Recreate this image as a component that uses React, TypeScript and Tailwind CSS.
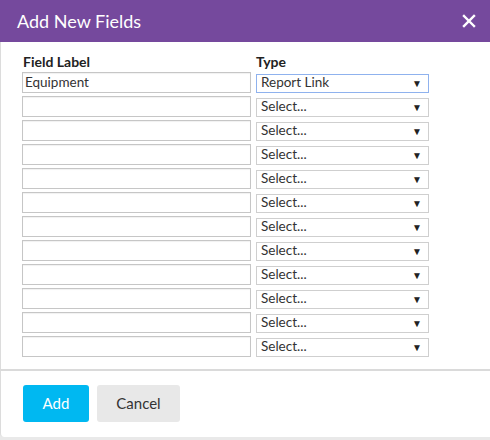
import React from "react";

const rows = Array.from({ length: 12 }, (_, i) => i);

export default function App() {
  return (
    <div
      className="w-[490px] h-[440px] bg-[#e9e9e9] overflow-hidden"
      style={{ fontFamily: "Lato, 'Noto Sans', sans-serif" }}
    >
      <div className="bg-white rounded-bl-[4px] border-l border-[#dcdcdc] h-[437px] flex flex-col">
        <div className="h-[42px] bg-[#75499d] flex items-center justify-between pl-[17px] pr-[14px] -ml-px">
          <span className="text-white text-[18px] leading-none">Add New Fields</span>
          <svg width="14" height="14" viewBox="0 0 14 14">
            <path d="M2 2 L12 12 M12 2 L2 12" stroke="white" strokeWidth="2.4" strokeLinecap="square" />
          </svg>
        </div>
        <div className="pl-[21px] pt-[11px] pb-[12px]">
          <div className="flex gap-[5px] text-[14px] font-bold text-[#222] leading-[18px] mb-[1px]">
            <div className="w-[229px] pl-[1px]">Field Label</div>
            <div className="w-[173px]">Type</div>
          </div>
          <div className="flex flex-col gap-[3px]">
            {rows.map((i) => (
              <div key={i} className="flex items-center gap-[5px] h-[21px]">
                <div className="w-[229px] h-[21px] border border-[#c6c6c6] bg-white text-[13.5px] text-[#333] leading-[19px] pl-[2px] shadow-[inset_0_1px_1px_rgba(0,0,0,0.06)]">
                  {i === 0 ? "Equipment" : ""}
                </div>
                <div
                  className={
                    "w-[173px] h-[19px] mt-[1px] border bg-white flex items-center justify-between pl-[4px] pr-[6px] text-[13.5px] text-[#333] leading-none " +
                    (i === 0 ? "border-[#8fb2ee]" : "border-[#cfcfcf]")
                  }
                >
                  <span>{i === 0 ? "Report Link" : "Select..."}</span>
                  <span className="text-[10px] text-[#222]">▼</span>
                </div>
              </div>
            ))}
          </div>
        </div>
        <div className="h-[2px] bg-[#dadada] -ml-px" />
        <div className="flex gap-[8px] pl-[22px] pt-[14px]">
          <button className="w-[66px] h-[37px] rounded-[3px] bg-[#00b8f1] text-white text-[15px]">Add</button>
          <button className="w-[83px] h-[37px] rounded-[3px] bg-[#e8e8e8] text-[#333] text-[15px]">Cancel</button>
        </div>
      </div>
    </div>
  );
}
